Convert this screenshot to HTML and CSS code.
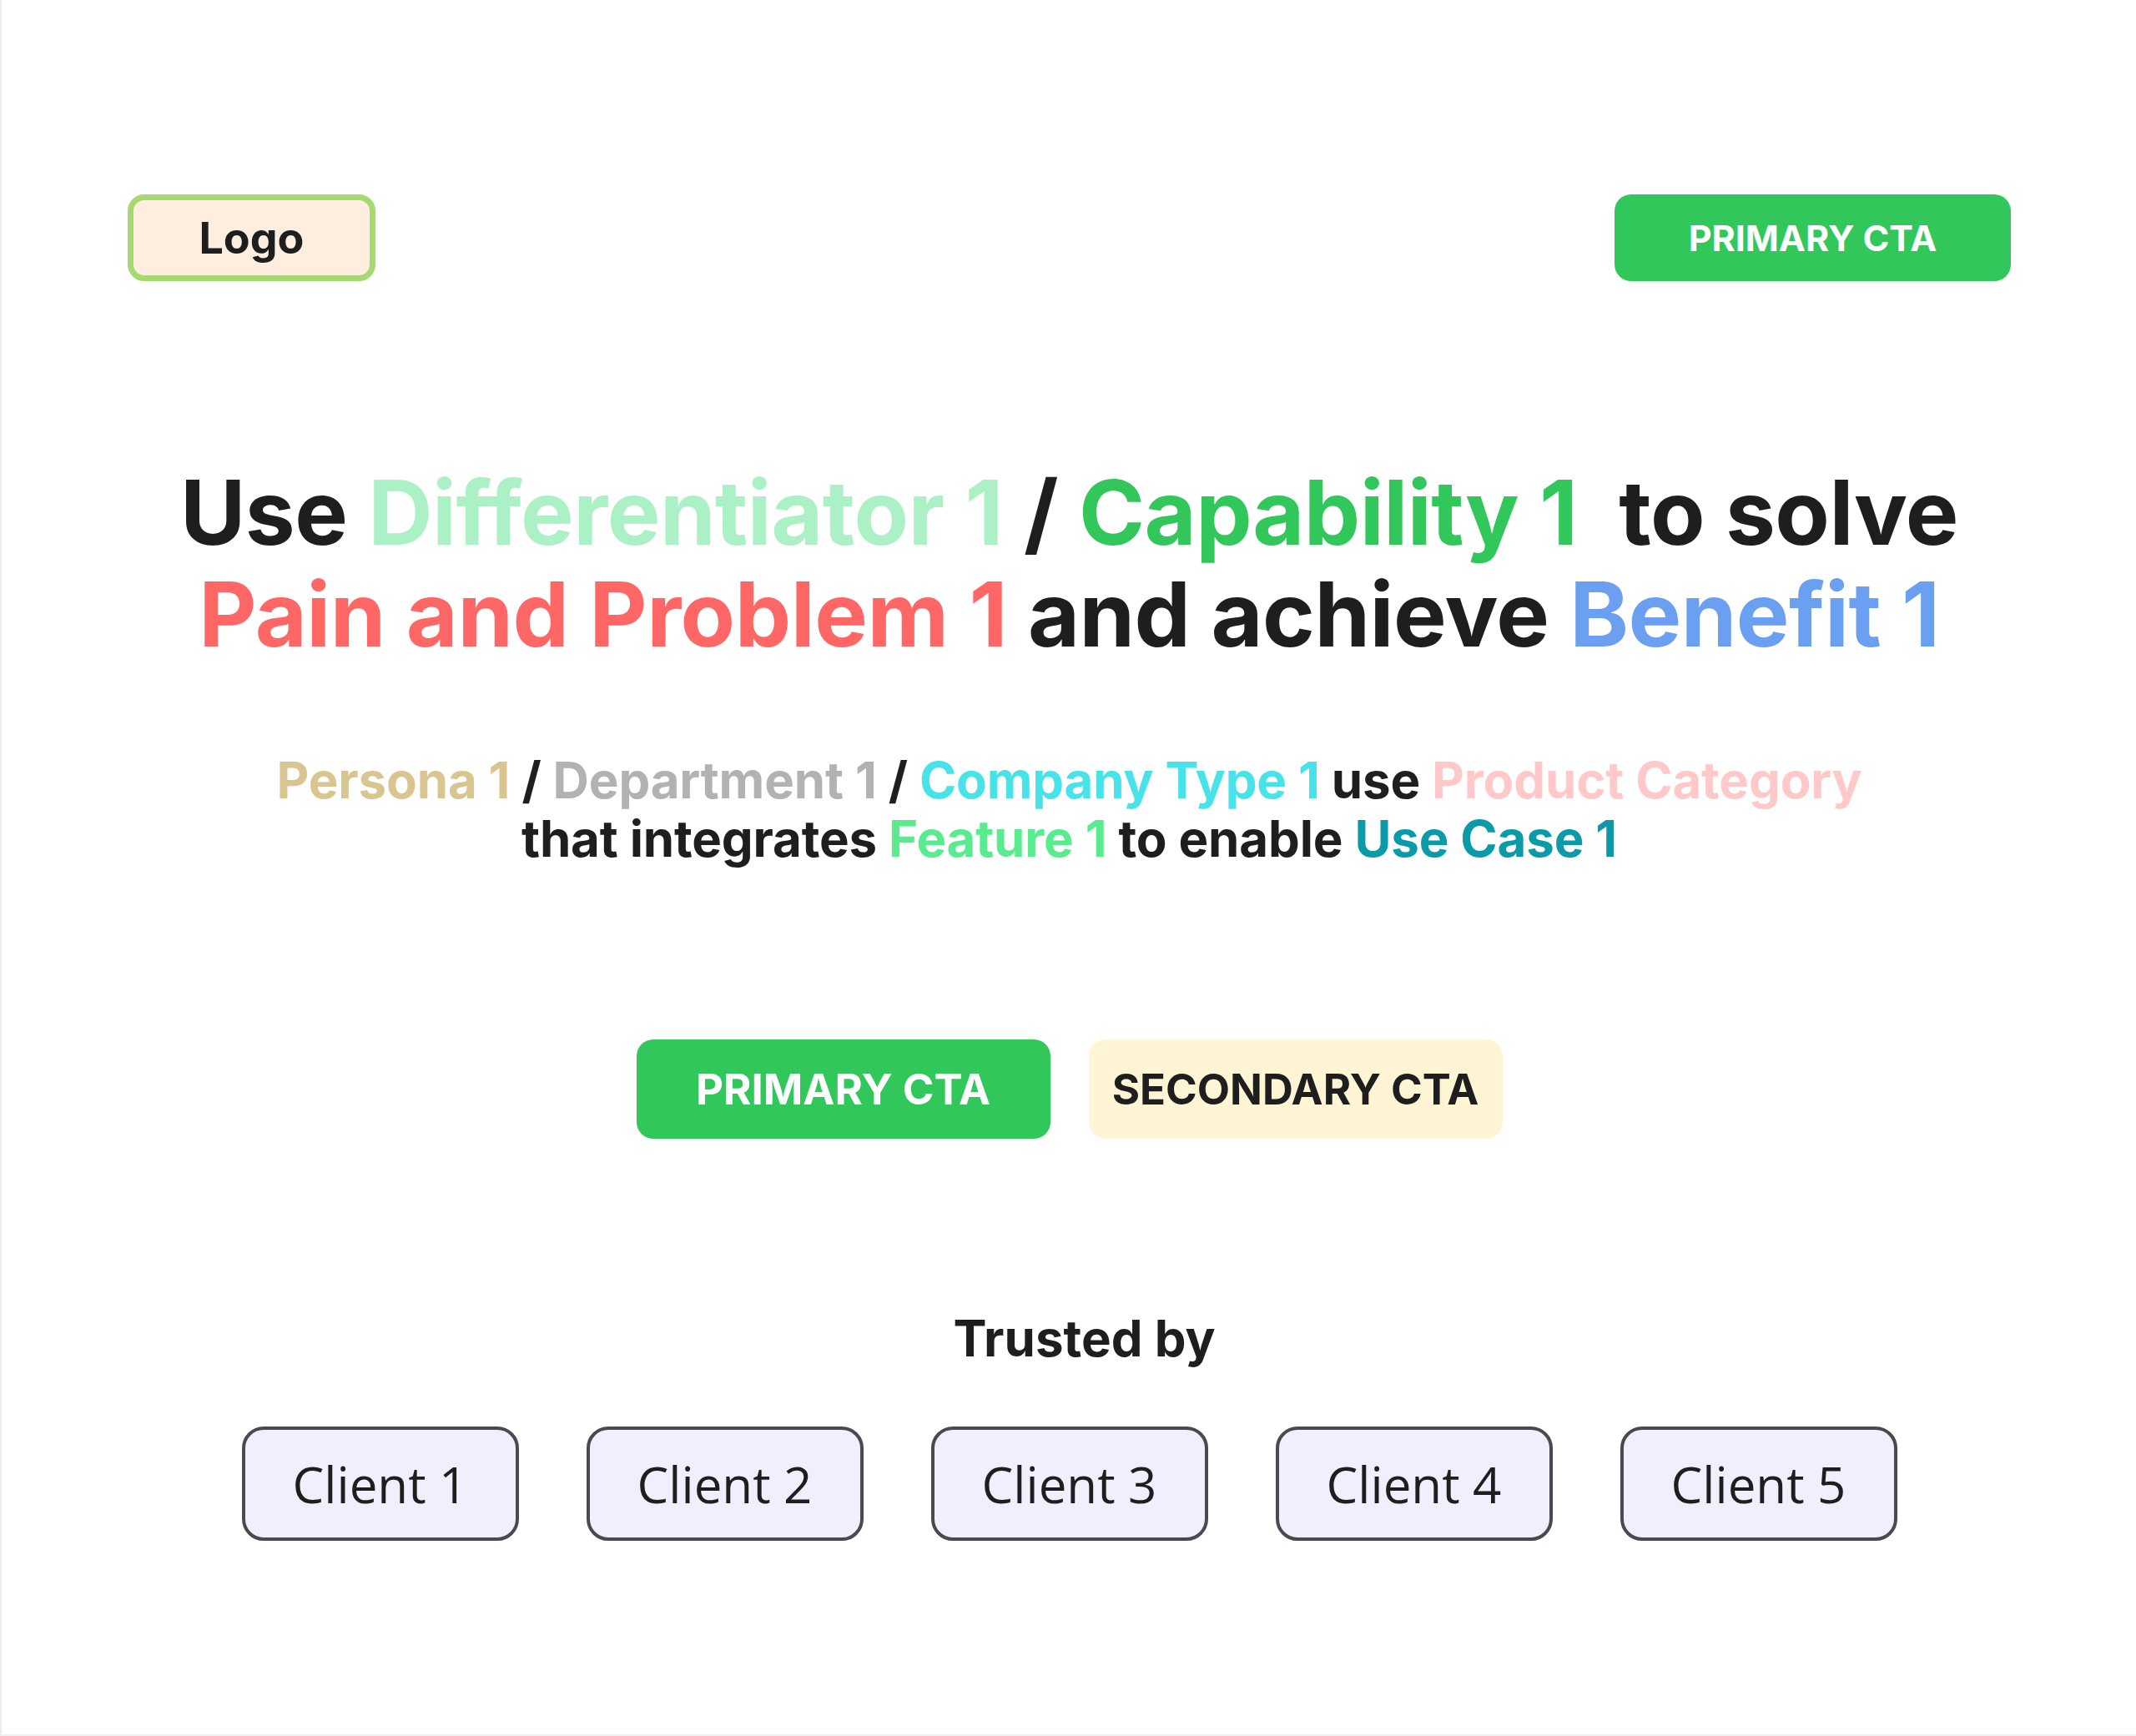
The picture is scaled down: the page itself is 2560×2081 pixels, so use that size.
FILE: index.html
```html
<!DOCTYPE html>
<html lang="en">
<head>
<meta charset="utf-8">
<title>Hero</title>
<link rel="stylesheet" href="styles.css">
</head>
<body>
<div class="page">
  <header class="topbar">
    <div class="logo">Logo</div>
    <a class="btn btn-primary btn-top">PRIMARY CTA</a>
  </header>

  <h1 class="headline">
    <span class="line">Use <span class="c-diff">Differentiator 1</span> / <span class="c-cap">Capability 1</span>&nbsp; to solve</span>
    <span class="line"><span class="c-pain">Pain and Problem 1</span> and achieve <span class="c-benefit">Benefit 1</span></span>
  </h1>

  <p class="sub">
    <span class="line"><span class="c-persona">Persona 1</span> / <span class="c-dept">Department 1</span> / <span class="c-company">Company Type 1</span> use <span class="c-product">Product Category</span></span>
    <span class="line">that integrates <span class="c-feature">Feature 1</span> to enable <span class="c-usecase">Use Case 1</span></span>
  </p>

  <div class="actions">
    <a class="btn btn-primary btn-big">PRIMARY CTA</a>
    <a class="btn btn-secondary btn-big">SECONDARY CTA</a>
  </div>

  <h2 class="trusted">Trusted by</h2>

  <div class="clients">
    <div class="client">Client 1</div>
    <div class="client">Client 2</div>
    <div class="client">Client 3</div>
    <div class="client">Client 4</div>
    <div class="client">Client 5</div>
  </div>
</div>
</body>
</html>
```

FILE: styles.css
```css
* {
  box-sizing: border-box;
}

html, body {
  margin: 0;
  padding: 0;
  background: #ffffff;
}

body {
  font-family: Inter, "Liberation Sans", sans-serif;
  color: #1e1e1e;
  width: 2560px;
  height: 2081px;
  border-left: 2px solid #ececec;
  border-bottom: 2px solid #f0f0f0;
  overflow: hidden;
}

.page {
  padding: 233px 150px 0 151px;
  display: flex;
  flex-direction: column;
}

.topbar {
  display: flex;
  justify-content: space-between;
  align-items: center;
}

.logo {
  width: 297px;
  height: 104px;
  border: 7px solid #a6d96f;
  border-radius: 20px;
  background: #fdeee0;
  display: flex;
  align-items: center;
  justify-content: center;
  font-weight: 700;
  font-size: 52px;
  color: #1e1e1e;
}

.btn {
  display: flex;
  align-items: center;
  justify-content: center;
  font-weight: 700;
  text-decoration: none;
  white-space: nowrap;
}

.btn-primary {
  background: #32c75b;
  color: #ffffff;
}

.btn-secondary {
  background: #fff4d3;
  color: #1e1e1e;
}

.btn-top {
  width: 475px;
  height: 104px;
  border-radius: 20px;
  font-size: 43px;
}

.headline {
  margin: 216px 0 0;
  font-size: 107px;
  line-height: 122px;
  font-weight: 700;
  text-align: center;
  letter-spacing: -0.5px;
}

.line {
  display: block;
  white-space: nowrap;
}

.c-diff { color: #acf0c6; }
.c-cap { color: #32c75b; }
.c-pain { color: #ff6767; }
.c-benefit { color: #6a9ff1; }

.sub {
  margin: 103px 0 0;
  font-size: 60px;
  line-height: 70px;
  font-weight: 700;
  text-align: center;
  letter-spacing: -0.15px;
}

.c-persona { color: #d9c58f; }
.c-dept { color: #b2b2b2; }
.c-company { color: #47e3e8; }
.c-product { color: #ffc9c9; }
.c-feature { color: #58ec8e; }
.c-usecase { color: #0a9aa8; }

.actions {
  margin-top: 206px;
  display: flex;
  justify-content: center;
  gap: 46px;
}

.btn-big {
  width: 496px;
  height: 119px;
  border-radius: 20px;
  font-size: 51px;
}

.trusted {
  margin: 203px 0 0;
  padding-left: 36px;
  font-size: 60px;
  line-height: 72px;
  font-weight: 700;
  text-align: center;
}

.clients {
  margin-top: 70px;
  display: flex;
  justify-content: center;
  gap: 81px;
}

.client {
  width: 332px;
  height: 137px;
  border: 4px solid #4a494e;
  border-radius: 26px;
  background: #f0effd;
  display: flex;
  align-items: center;
  justify-content: center;
  font-family: "Open Sans", "Noto Sans", sans-serif;
  font-weight: 400;
  font-size: 60px;
  color: #1e1e1e;
}
```
